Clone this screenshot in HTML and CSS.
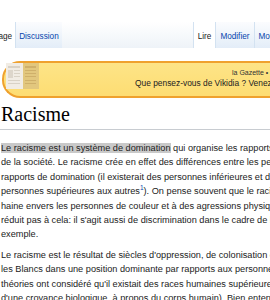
FILE: index.html
```html
<!DOCTYPE html>
<html lang="fr">
<head>
  <meta charset="UTF-8">
  <title>Racisme — Vikidia</title>
  <link rel="stylesheet" href="styles.css">
</head>
<body>
  <div class="page">
    <div class="tabs">
      <div class="tab selected">Page</div>
      <div class="tab">Discussion</div>
      <div class="tabs-right">
        <div class="tab selected">Lire</div>
        <div class="tab">Modifier</div>
        <div class="tab">Modifier le wikicode</div>
      </div>
    </div>

    <div class="banner">
      <svg class="banner-icon" width="33" height="26" viewBox="0 0 33 26">
        <rect x="0" y="0" width="17" height="26" fill="#f1ece4"/>
        <rect x="2" y="3" width="12" height="2" fill="#d9d2c6"/>
        <rect x="2" y="7" width="5" height="8" fill="#ddd6cb"/>
        <rect x="8" y="7" width="6" height="1" fill="#d9d2c6"/>
        <rect x="8" y="10" width="6" height="1" fill="#d9d2c6"/>
        <rect x="8" y="13" width="6" height="1" fill="#d9d2c6"/>
        <rect x="2" y="17" width="12" height="1" fill="#d9d2c6"/>
        <rect x="2" y="20" width="12" height="1" fill="#d9d2c6"/>
        <rect x="17" y="0" width="16" height="26" fill="#e2c77e"/>
        <rect x="19" y="3" width="11" height="2" fill="#cfb06a"/>
        <rect x="19" y="7" width="11" height="1" fill="#cfb06a"/>
        <rect x="19" y="10" width="11" height="1" fill="#cfb06a"/>
        <rect x="19" y="13" width="11" height="1" fill="#cfb06a"/>
        <rect x="19" y="17" width="11" height="1" fill="#cfb06a"/>
        <rect x="19" y="20" width="11" height="1" fill="#cfb06a"/>
      </svg>
      <div class="banner-text">
        <div class="banner-small">la Gazette • Le forum</div>
        <div class="banner-main">Que pensez-vous de Vikidia ? Venez donner votre avis !</div>
      </div>
    </div>

    <h1 class="title">Racisme</h1>

    <div class="content">
      <p><span class="mark">Le racisme est un système de domination</span> qui organise les rapports entre les groupes<br>
      de la société. Le racisme crée en effet des différences entre les personnes et justifie des<br>
      rapports de domination (il existerait des personnes inférieures et des<br>
      personnes supérieures aux autres<sup class="ref">1</sup>). On pense souvent que le racisme se limite à la<br>
      haine envers les personnes de couleur et à des agressions physiques, mais il ne se<br>
      réduit pas à cela: il s'agit aussi de discrimination dans le cadre de l'emploi, par<br>
      exemple.</p>
      <p>Le racisme est le résultat de siècles d'oppression, de colonisation et d'esclavage qui ont mis<br>
      les Blancs dans une position dominante par rapports aux personnes racisées. Des<br>
      théories ont considéré qu'il existait des races humaines supérieures et inférieures (à partir<br>
      d'une croyance biologique, à propos du corps humain). Bien entendu, c'est faux.</p>
    </div>
  </div>
</body>
</html>
```

FILE: styles.css
```css
body {
  margin: 0;
  overflow: hidden;
  background: #fff;
  font-family: "Liberation Sans", Arial, sans-serif;
  color: #222;
}
.page {
  width: 700px;
}
.tabs {
  display: flex;
  margin-top: 22px;
  margin-left: -11px;
  height: 26px;
  background: linear-gradient(#fff, #eef3f8);
}
.tabs-right {
  display: flex;
  margin-left: 131px;
}
.tab {
  padding: 2px 3px 0;
  font-size: 8.2px;
  line-height: 26px;
  color: #0645ad;
  background: linear-gradient(#fbfcfe, #e3edf8);
  border-left: 1px solid #d3e2f1;
}
.tabs-right .tab {
  padding: 2px 4px 0;
}
.tab.selected {
  color: #222;
  background: #fff;
}
.banner {
  display: flex;
  margin: 13px 0 0 2px;
  height: 33px;
  border: 2px solid #efa12e;
  border-right: none;
  border-radius: 18px 0 0 18px;
  background: linear-gradient(#fde487, #fddd73);
}
.banner-icon {
  margin: 0 0 0 2px;
  flex-shrink: 0;
}
.banner-text {
  margin-left: 96px;
  white-space: nowrap;
}
.banner-small {
  padding: 5px 0 0 97px;
  font-size: 7px;
  line-height: 9px;
  color: #333;
}
.banner-main {
  font-size: 8.4px;
  line-height: 12px;
  color: #222;
}
.title {
  margin: 4px 0 0;
  padding: 0 0 3px 1px;
  font-family: "Liberation Serif", "Times New Roman", serif;
  font-weight: normal;
  font-size: 20px;
  line-height: 24px;
  color: #000;
  border-bottom: 1px solid #c8ccd1;
}
.content {
  margin-top: 11px;
  padding-left: 1px;
  font-size: 9.2px;
  line-height: 14.4px;
  white-space: nowrap;
}
.content p {
  margin: 0 0 6px;
}
.mark {
  background: #c9c9c9;
}
.ref {
  font-size: 6.5px;
  line-height: 1;
  color: #0645ad;
}
```
